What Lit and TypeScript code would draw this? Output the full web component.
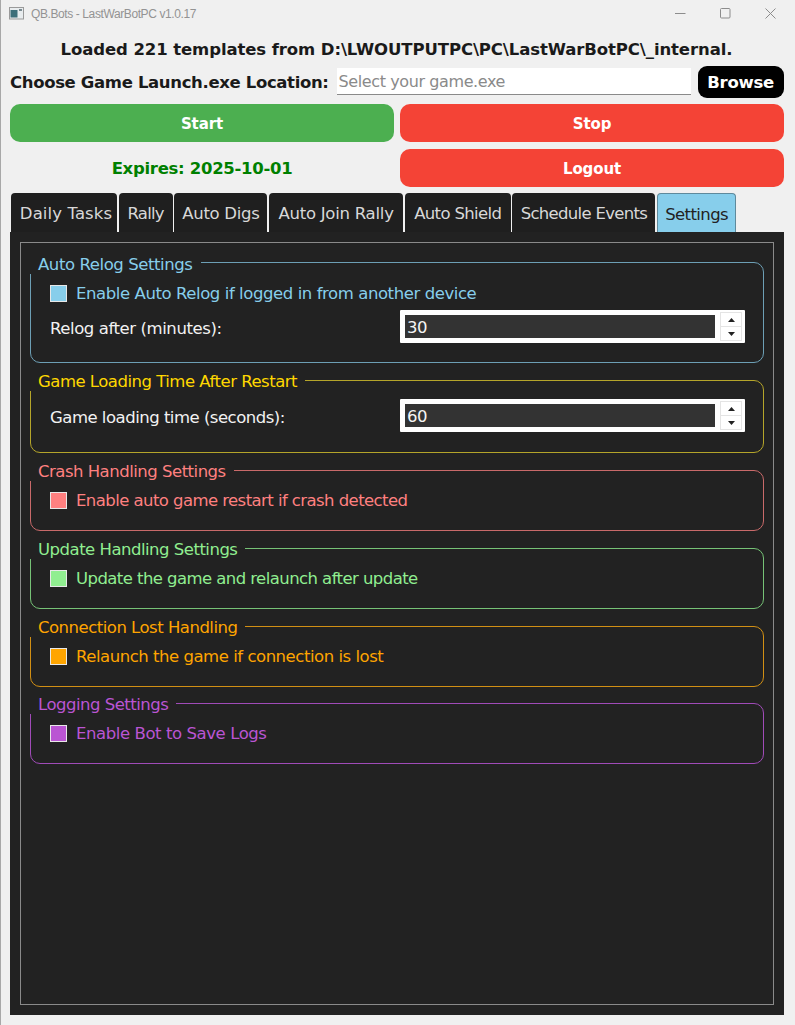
import { LitElement, html, css } from "lit";
import { customElement } from "lit/decorators.js";

const TABS = [
  ["Daily Tasks", 106, 0.1],
  ["Rally", 54, -0.75],
  ["Auto Digs", 93, -0.3],
  ["Auto Join Rally", 134, -0.25],
  ["Auto Shield", 106, -0.65],
  ["Schedule Events", 143, -0.7],
  ["Settings", 79, -0.6],
] as const;

@customElement("app-root")
export class AppRoot extends LitElement {
  static styles = css`
    :host {
      display: block;
      width: 795px;
      height: 1025px;
      box-sizing: border-box;
      background: #f0f0f0;
      border-left: 1px solid #a8a8a8;
      font-family: "DejaVu Sans", sans-serif;
      font-size: 16.5px;
      letter-spacing: -0.42px;
      overflow: hidden;
    }
    .titlebar {
      height: 27px;
      display: flex;
      align-items: center;
      padding-left: 8px;
      color: #939393;
      font-family: "Liberation Sans", sans-serif;
      font-size: 12px;
      letter-spacing: -0.4px;
    }
    .app-icon { margin-right: 7px; }
    .title-text { flex: 1; }
    .win { display: flex; gap: 34px; padding-right: 19px; align-items: center; }
    .win svg { display: block; }
    .content {
      padding: 0 10px 0 9px;
      display: flex;
      flex-direction: column;
    }
    .loaded {
      font-weight: 700;
      color: #1a1a1a;
      text-align: center;
      line-height: 20px;
      margin: 13px 0 6px;
      padding-right: 2px;
      letter-spacing: -0.1px;
    }
    .chooser {
      display: flex;
      align-items: center;
      height: 32px;
      gap: 8px;
    }
    .chooser label { font-weight: 700; color: #1a1a1a; white-space: nowrap; letter-spacing: -0.35px; }
    .path {
      width: 354px;
      height: 27px;
      box-sizing: border-box;
      margin-top: -1px;
      background: #fff;
      border-bottom: 1px solid #8a8a8a;
      color: #8a8a8a;
      padding-left: 2px;
      line-height: 28px;
      font-size: 16px;
      letter-spacing: -0.4px;
    }
    .browse {
      margin-left: -1px;
      width: 86px;
      height: 32px;
      border-radius: 9px;
      background: #000;
      color: #fff;
      font-weight: 700;
      letter-spacing: -0.3px;
      display: flex;
      align-items: center;
      justify-content: center;
    }
    .actions {
      display: grid;
      grid-template-columns: 384px 384px;
      grid-template-rows: 38px 38px;
      column-gap: 6px;
      row-gap: 7px;
      margin-top: 6px;
    }
    .btn {
      border-radius: 10px;
      color: #fff;
      font-weight: 700;
      font-size: 15px;
      letter-spacing: -0.1px;
      padding-top: 1px;
      box-sizing: border-box;
      display: flex;
      align-items: center;
      justify-content: center;
    }
    .green { background: #4caf50; }
    .red { background: #f44336; }
    .expires {
      color: #008000;
      font-weight: 700;
      letter-spacing: -0.3px;
      display: flex;
      align-items: center;
      justify-content: center;
    }
    .tabs {
      display: flex;
      gap: 1.7px;
      margin-top: 6px;
      padding-left: 1px;
      height: 39px;
    }
    .tab {
      box-sizing: border-box;
      background: #1f1f1f;
      color: #d8d8d8;
      border-radius: 4px 4px 0 0;
      padding-top: 2px;
      display: flex;
      align-items: center;
      justify-content: center;
      white-space: nowrap;
    }
    .tab:first-child { padding-left: 4px; }
    .tab.active {
      background: #87ceeb;
      color: #222;
      border: 1px solid #5f8a9c;
      border-bottom: 0;
    }
    .panel {
      background: #222222;
      width: 774px;
      height: 783px;
      box-sizing: border-box;
      padding: 10px;
    }
    .frame {
      height: 100%;
      box-sizing: border-box;
      border: 1px solid #8a8a8a;
      padding: 19px 9px 0;
      display: flex;
      flex-direction: column;
      gap: 17px;
    }
    .group {
      position: relative;
      border: 1px solid var(--c);
      border-radius: 10px;
      box-sizing: border-box;
      padding: 12px 18px 0 19px;
    }
    .legend {
      position: absolute;
      left: -1px;
      top: -10px;
      height: 20px;
      line-height: 21px;
      padding: 0 8px;
      background: #222222;
      color: var(--t);
      letter-spacing: -0.5px;
    }
    .g1 .legend { top: -9px; letter-spacing: -0.42px; }
    .check {
      display: flex;
      align-items: center;
      gap: 9px;
      height: 35px;
      color: var(--t);
    }
    .g1 .check { margin-bottom: -1px; }
    .g3 .check, .g4 .check { letter-spacing: -0.57px; }
    .g5 .check { letter-spacing: -0.47px; }
    .box {
      width: 15px;
      height: 15px;
      background: var(--t);
      border: 1px solid #e8e8e8;
    }
    .row {
      display: flex;
      align-items: center;
      justify-content: space-between;
      color: #f2f2f2;
      height: 33px;
    }
    .g2 .lbl { letter-spacing: -0.5px; }
    .lbl { margin-top: 3px; }
    .spin {
      width: 345px;
      height: 33px;
      box-sizing: border-box;
      background: #fff;
      padding: 5px;
      display: flex;
      gap: 5px;
      border-radius: 1px;
    }
    .value {
      flex: 1;
      background: #333333;
      color: #f5f5f5;
      line-height: 25px;
      padding-left: 2px;
    }
    .arrows {
      width: 22px;
      margin: -3px -2px -3px 0;
      display: flex;
      flex-direction: column;
      gap: 1px;
      background: #e4e4e4;
      border: 1px solid #e4e4e4;
      box-sizing: border-box;
    }
    .arrows span {
      flex: 1;
      background: #fff;
      display: flex;
      align-items: center;
      justify-content: center;
    }
    .g1 { --c: #6d9fb5; --t: #87ceeb; height: 101px; padding-top: 13px; }
    .g2 { --c: #b5a52a; --t: #ffd700; height: 73px; padding-top: 18px; }
    .g3 { --c: #c96a6a; --t: #ff8080; height: 61px; }
    .g4 { --c: #76c276; --t: #90ee90; height: 61px; }
    .g5 { --c: #d18f14; --t: #ffa500; height: 61px; }
    .g6 { --c: #a04bb8; --t: #ba55d3; height: 61px; margin-top: -1px; }
  `;

  private spin(v: string) {
    return html`<div class="spin">
      <div class="value">${v}</div>
      <div class="arrows">
        <span><svg width="7" height="4" viewBox="0 0 7 4"><path d="M3.5 0L7 4H0z" fill="#222" /></svg></span>
        <span><svg width="7" height="4" viewBox="0 0 7 4"><path d="M0 0H7L3.5 4z" fill="#222" /></svg></span>
      </div>
    </div>`;
  }

  render() {
    return html`
      <div class="titlebar">
        <svg class="app-icon" width="15" height="13" viewBox="0 0 15 13">
          <rect x=".5" y=".5" width="14" height="11.5" fill="#e8ecee" stroke="#9a9a9a" />
          <rect x="1.5" y="3" width="7" height="7.5" fill="#3d6f7a" />
          <rect x="10" y="2" width="3" height="2" fill="#7a8a90" />
        </svg>
        <div class="title-text">QB.Bots - LastWarBotPC v1.0.17</div>
        <div class="win">
          <svg width="11" height="11" viewBox="0 0 11 11"><path d="M0 5.5H10.5" stroke="#8c8c8c" /></svg>
          <svg width="11" height="11" viewBox="0 0 11 11"><rect x=".5" y=".5" width="9.5" height="9.5" rx="1" fill="none" stroke="#8c8c8c" /></svg>
          <svg width="11" height="11" viewBox="0 0 11 11"><path d="M.5 .5L10.5 10.5M10.5 .5L.5 10.5" stroke="#8c8c8c" /></svg>
        </div>
      </div>
      <div class="content">
        <div class="loaded">Loaded 221 templates from D:\\LWOUTPUTPC\\PC\\LastWarBotPC\\_internal.</div>
        <div class="chooser">
          <label>Choose Game Launch.exe Location:</label>
          <div class="path">Select your game.exe</div>
          <div class="browse">Browse</div>
        </div>
        <div class="actions">
          <div class="btn green">Start</div>
          <div class="btn red">Stop</div>
          <div class="expires">Expires: 2025-10-01</div>
          <div class="btn red">Logout</div>
        </div>
        <div class="tabs">
          ${TABS.map(
            ([t, w, ls]) =>
              html`<div class="tab ${t === "Settings" ? "active" : ""}" style="width:${w}px;letter-spacing:${ls}px">${t}</div>`
          )}
        </div>
        <div class="panel">
          <div class="frame">
            <div class="group g1">
              <div class="legend">Auto Relog Settings</div>
              <div class="check"><span class="box"></span>Enable Auto Relog if logged in from another device</div>
              <div class="row"><span class="lbl">Relog after (minutes):</span>${this.spin("30")}</div>
            </div>
            <div class="group g2">
              <div class="legend">Game Loading Time After Restart</div>
              <div class="row"><span class="lbl">Game loading time (seconds):</span>${this.spin("60")}</div>
            </div>
            <div class="group g3">
              <div class="legend">Crash Handling Settings</div>
              <div class="check"><span class="box"></span>Enable auto game restart if crash detected</div>
            </div>
            <div class="group g4">
              <div class="legend">Update Handling Settings</div>
              <div class="check"><span class="box"></span>Update the game and relaunch after update</div>
            </div>
            <div class="group g5">
              <div class="legend">Connection Lost Handling</div>
              <div class="check"><span class="box"></span>Relaunch the game if connection is lost</div>
            </div>
            <div class="group g6">
              <div class="legend">Logging Settings</div>
              <div class="check"><span class="box"></span>Enable Bot to Save Logs</div>
            </div>
          </div>
        </div>
      </div>
    `;
  }
}
